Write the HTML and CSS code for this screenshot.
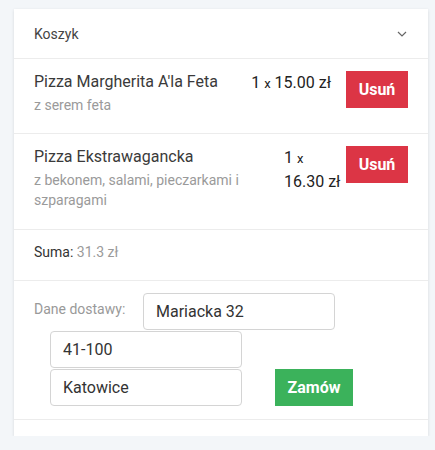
FILE: index.html
```html
<!DOCTYPE html>
<html lang="pl">
<head>
<meta charset="utf-8">
<title>Koszyk</title>
<link rel="stylesheet" href="styles.css">
</head>
<body>
<div class="card">
  <div class="card-header">
    <span class="card-title">Koszyk</span>
    <svg class="chevron" width="10" height="6" viewBox="0 0 10 6"><path d="M1 1 L5 5 L9 1" fill="none" stroke="#666" stroke-width="1.2"/></svg>
  </div>
  <div class="item">
    <div class="item-info">
      <div class="item-name">Pizza Margherita A'la Feta</div>
      <div class="item-desc">z serem feta</div>
    </div>
    <div class="item-qty">1 <span class="times">x</span> 15.00 zł</div>
    <button class="btn btn-danger">Usuń</button>
  </div>
  <div class="item item-tall">
    <div class="item-info">
      <div class="item-name">Pizza Ekstrawagancka</div>
      <div class="item-desc">z bekonem, salami, pieczarkami i szparagami</div>
    </div>
    <div class="item-qty item-qty-narrow">1 <span class="times">x</span> <span class="price">16.30 zł</span></div>
    <button class="btn btn-danger">Usuń</button>
  </div>
  <div class="sum">Suma: <span class="sum-value">31.3 zł</span></div>
  <form class="delivery">
    <div class="delivery-row">
      <label class="delivery-label" for="street">Dane dostawy:</label>
      <input class="field" id="street" type="text" value="Mariacka 32">
    </div>
    <div class="delivery-fields">
      <input class="field" type="text" value="41-100">
      <div class="delivery-last">
        <input class="field" type="text" value="Katowice">
        <button class="btn btn-success" type="button">Zamów</button>
      </div>
    </div>
  </form>
  <div class="card-footer"></div>
</div>
</body>
</html>
```
FILE: styles.css
```css
* { box-sizing: border-box; }
html, body { margin: 0; padding: 0; }
body {
  background: #f3f6f9;
  font-family: Roboto, "Liberation Sans", Arial, sans-serif;
  color: #333;
  padding: 9px 7px 0 14px;
}
.card {
  width: 414px;
  background: #fff;
  box-shadow: 0 1px 3px rgba(0, 0, 0, 0.12);
}
.card-header {
  height: 50px;
  padding: 0 20px 0 20px;
  display: flex;
  align-items: center;
  justify-content: space-between;
  border-bottom: 1px solid #ececec;
}
.card-title {
  font-size: 14px;
  color: #444;
  padding-top: 1px;
}
.chevron { display: block; margin-right: 1px; }
.item {
  display: flex;
  align-items: flex-start;
  padding: 12px 20px 18px;
  border-bottom: 1px solid #ececec;
}
.item-tall { padding-bottom: 19px; }
.item-info { flex: 1; min-width: 0; }
.item-name {
  font-size: 16px;
  line-height: 22px;
  color: #3a3a3a;
}
.item-desc {
  margin-top: 2px;
  font-size: 14px;
  line-height: 20px;
  color: #9a9a9a;
}
.item-qty {
  font-size: 16px;
  line-height: 23px;
  color: #222;
  margin-right: 15px;
  white-space: nowrap;
}
.item-qty-narrow {
  width: 62px;
  white-space: normal;
  margin-right: 0;
}
.price { white-space: nowrap; }
.times { font-size: 13px; }
.btn {
  border: 0;
  border-radius: 0;
  color: #fff;
  font-family: inherit;
  font-weight: bold;
  font-size: 16px;
  height: 37px;
  padding: 0;
  cursor: pointer;
}
.btn-danger {
  background: #dc3545;
  width: 62px;
  flex: none;
}
.btn-success {
  background: #3bb25b;
  width: 78px;
  font-size: 16px;
}
.sum {
  font-size: 14px;
  line-height: 20px;
  padding: 12px 20px 18px;
  border-bottom: 1px solid #ececec;
  color: #333;
}
.sum-value { color: #9a9a9a; }
.delivery {
  margin: 0;
  padding: 12px 20px 13px;
  border-bottom: 1px solid #ececec;
}
.delivery-row {
  display: flex;
  align-items: flex-start;
  gap: 16px;
}
.delivery-label {
  flex: none;
  width: 93px;
  font-size: 14px;
  line-height: 20px;
  color: #999;
  padding-top: 6px;
  white-space: nowrap;
}
.field {
  width: 192px;
  height: 37px;
  border: 1px solid #d4d4d4;
  border-radius: 4px;
  padding: 0 12px;
  font-family: inherit;
  font-size: 16px;
  color: #333;
  background: #fff;
  display: block;
}
.delivery-fields {
  margin-left: 16px;
  margin-top: 1px;
  display: flex;
  flex-direction: column;
  gap: 1px;
}
.delivery-last {
  display: flex;
  align-items: flex-end;
  gap: 33px;
}
.card-footer { height: 16px; }
```
